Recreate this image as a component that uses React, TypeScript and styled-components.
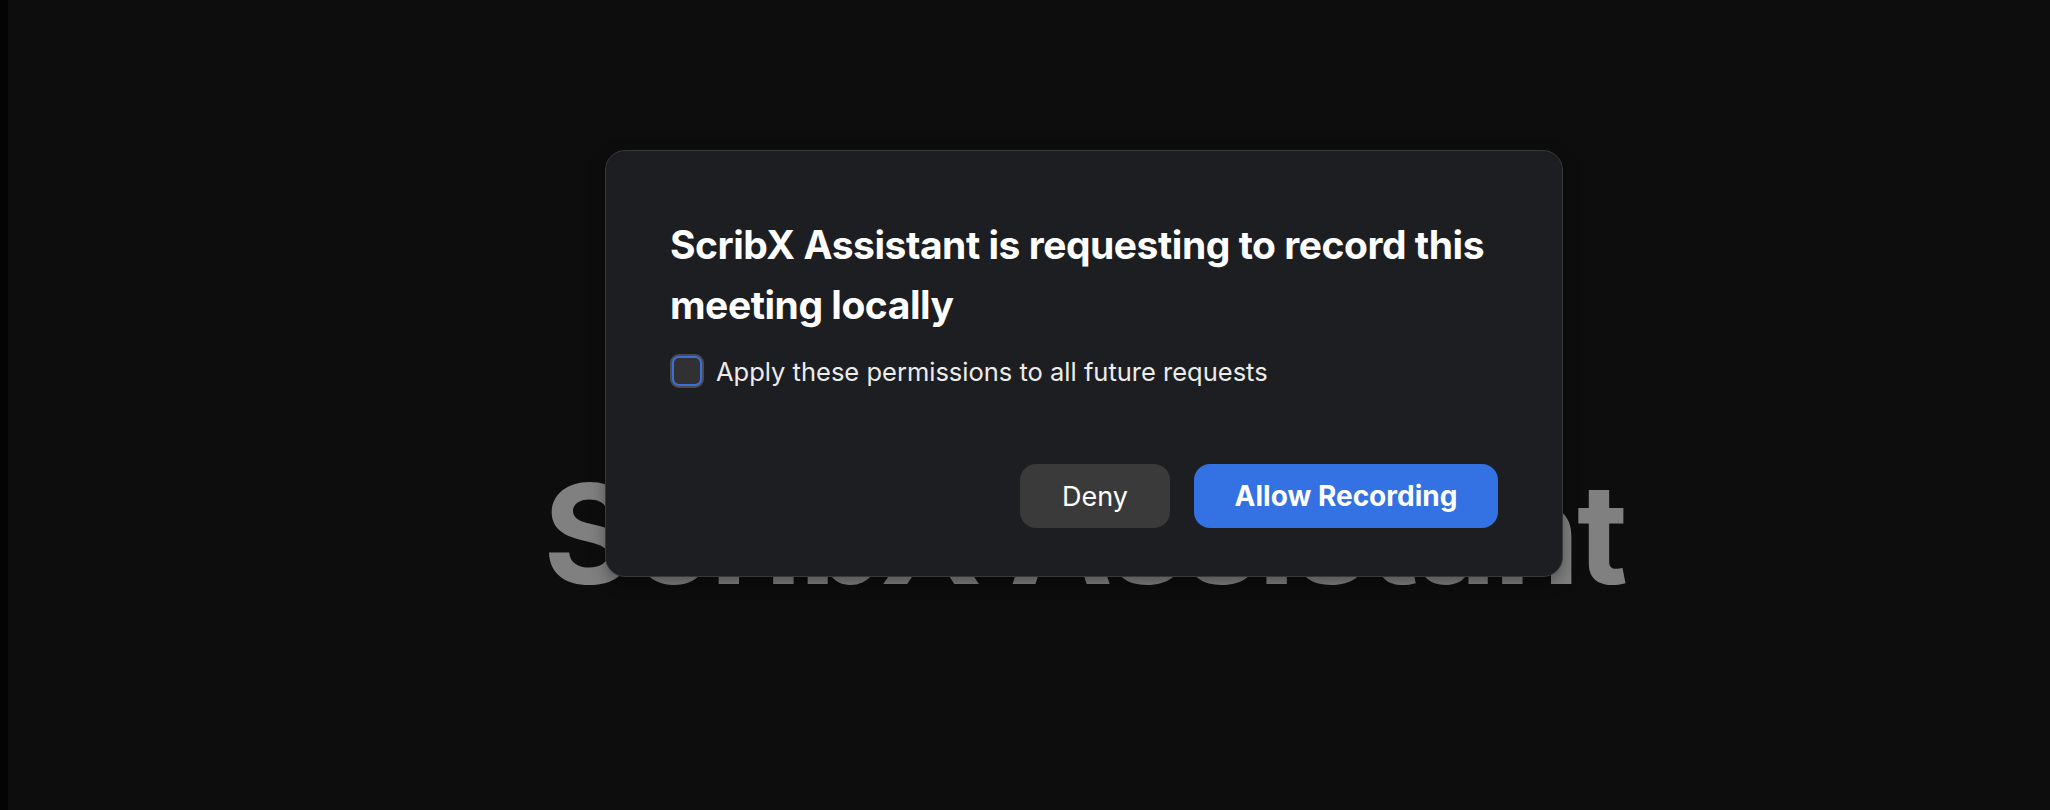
import React, { useState } from 'react';
import styled, { createGlobalStyle } from 'styled-components';

const GlobalStyle = createGlobalStyle`
  html, body {
    margin: 0;
    padding: 0;
    background-color: #040404;
    font-family: Inter, "Noto Sans", sans-serif;
    -webkit-font-smoothing: antialiased;
  }
`;

const Page = styled.div`
  display: flex;
  height: 810px;
  overflow: hidden;
`;

const Edge = styled.div`
  width: 8px;
  flex-shrink: 0;
  background-color: #040404;
`;

const Stage = styled.main`
  position: relative;
  flex: 1;
  display: flex;
  justify-content: center;
  align-items: flex-start;
  padding-left: 110px;
  padding-top: 464px;
  background-color: #0d0d0d;
`;

const Backdrop = styled.h1`
  margin: 0;
  font-size: 139px;
  line-height: 1;
  font-weight: 700;
  letter-spacing: -0.022em;
  color: #808080;
  white-space: nowrap;
`;

const Overlay = styled.div`
  position: absolute;
  inset: 0;
  display: flex;
  justify-content: center;
  align-items: flex-start;
  padding-left: 110px;
  padding-top: 150px;
`;

const Modal = styled.div`
  box-sizing: border-box;
  width: 958px;
  padding: 64px 64px 48px 64px;
  background-color: #1d1e21;
  border: 1px solid #38393c;
  border-radius: 20px;
  box-shadow: 0 6px 16px rgba(0, 0, 0, 0.35);
`;

const Title = styled.h2`
  margin: 0;
  font-size: 39px;
  line-height: 60px;
  font-weight: 700;
  color: #ffffff;
  letter-spacing: -0.012em;
`;

const CheckRow = styled.label`
  display: flex;
  align-items: center;
  gap: 12px;
  margin-top: 19px;
  cursor: pointer;
`;

const Box = styled.span<{ $checked: boolean }>`
  box-sizing: border-box;
  width: 30px;
  height: 30px;
  margin: 2px;
  border-radius: 7px;
  border: 2px solid #3a6fd9;
  box-shadow: 0 0 0 2px #4b4b4d;
  background-color: ${(p) => (p.$checked ? '#3a6fd9' : '#313133')};
  display: flex;
  align-items: center;
  justify-content: center;
`;

const CheckLabel = styled.span`
  font-size: 25.5px;
  font-weight: 400;
  color: #ececec;
`;

const Actions = styled.div`
  display: flex;
  justify-content: flex-end;
  gap: 24px;
  margin-top: 76px;
`;

const Button = styled.button<{ $primary?: boolean }>`
  height: 64px;
  padding: 0 40px;
  min-width: ${(p) => (p.$primary ? '304px' : '150px')};
  border: none;
  border-radius: 16px;
  font-family: Inter, "Noto Sans", sans-serif;
  font-size: ${(p) => (p.$primary ? '28px' : '27px')};
  font-weight: ${(p) => (p.$primary ? 700 : 400)};
  color: #ffffff;
  background-color: ${(p) => (p.$primary ? '#3471e2' : '#3a3a3b')};
  cursor: pointer;
`;

export default function App() {
  const [applyAll, setApplyAll] = useState(false);

  return (
    <>
      <GlobalStyle />
      <Page>
        <Edge />
        <Stage>
          <Backdrop>ScribX Assistant</Backdrop>
          <Overlay>
            <Modal>
              <Title>ScribX Assistant is requesting to record this meeting locally</Title>
              <CheckRow onClick={() => setApplyAll(!applyAll)}>
                <Box $checked={applyAll}>
                  {applyAll && (
                    <svg width="18" height="18" viewBox="0 0 24 24" fill="none" stroke="#fff" strokeWidth="3">
                      <path d="M5 12l5 5 9-10" />
                    </svg>
                  )}
                </Box>
                <CheckLabel>Apply these permissions to all future requests</CheckLabel>
              </CheckRow>
              <Actions>
                <Button>Deny</Button>
                <Button $primary>Allow Recording</Button>
              </Actions>
            </Modal>
          </Overlay>
        </Stage>
      </Page>
    </>
  );
}
